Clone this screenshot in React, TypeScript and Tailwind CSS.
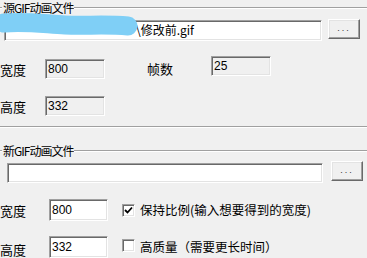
const cjk = "font-['Noto_Sans_CJK_SC','Noto_Sans',sans-serif]";

const Etched = ({ className = "" }: { className?: string }) => (
    <div className={`h-[2px] border-t border-t-[#a0a0a0] border-b border-b-white ${className}`} />
);

const GroupTitle = ({ text }: { text: string }) => (
    <div className="flex items-center h-[15px]">
        <Etched className="w-[2px]" />
        <span className={`px-[1px] text-[12px] leading-none tracking-[-1px] text-black ${cjk}`}>{text}</span>
        <Etched className="flex-1" />
    </div>
);

const sunken =
    "border border-t-[#a0a0a0] border-l-[#a0a0a0] border-r-white border-b-white shadow-[inset_1px_1px_0_#696969,inset_-1px_-1px_0_#e3e3e3]";

const Field = ({
    value,
    readOnly,
    className = "",
}: {
    value: string;
    readOnly?: boolean;
    className?: string;
}) => (
    <div
        className={`flex items-center pl-[2px] pb-[1px] text-[12px] text-black font-['Liberation_Sans',sans-serif] ${sunken} ${
            readOnly ? "bg-[#f0f0f0]" : "bg-white"
        } ${className}`}
    >
        {value}
    </div>
);

const BrowseButton = ({ className = "" }: { className?: string }) => (
    <div
        className={`flex items-end justify-center pb-[5px] w-[32px] h-[20px] bg-[#f0f0f0] border border-t-white border-l-white border-r-[#696969] border-b-[#696969] shadow-[inset_-1px_-1px_0_#a0a0a0,inset_1px_1px_0_#e3e3e3] ${className}`}
    >
        <span className="text-[9px] leading-none tracking-[2px] text-[#333] font-['Liberation_Sans',sans-serif]">...</span>
    </div>
);

const Label = ({ text, className = "" }: { text: string; className?: string }) => (
    <span className={`leading-none text-black ${cjk} ${className}`}>{text}</span>
);

const Check = ({ checked }: { checked?: boolean }) => (
    <div className={`w-[13px] h-[13px] bg-white flex items-center justify-center ${sunken}`}>
        {checked && (
            <svg width="9" height="9" viewBox="0 0 9 9">
                <path d="M1 4 L3.5 6.5 L8 1.5" fill="none" stroke="#000" strokeWidth="1.8" />
            </svg>
        )}
    </div>
);

export default function App() {
    return (
        <div className="relative w-[367px] h-[258px] overflow-hidden bg-[#f0f0f0]">
            {/* source group */}
            <GroupTitle text="源GIF动画文件" />
            <div className="flex items-start mt-[5px] pl-[4px]">
                <div className={`flex items-center w-[318px] h-[21px] bg-white pb-[1px] text-[12px] text-black ${sunken} ${cjk}`}>
                    <span className="w-[131px] shrink-0" />
                    <span>\修改前.gif</span>
                </div>
                <BrowseButton className="ml-[6px] -mt-[1px]" />
            </div>
            <div className="flex items-center mt-[18px]">
                <Label text="宽度" className="text-[13px] w-[45px]" />
                <Field value="800" readOnly className="w-[60px] h-[20px]" />
                <Label text="帧数" className="text-[13px] ml-[42px] w-[64px] -mt-[1px]" />
                <Field value="25" readOnly className="w-[60px] h-[20px] -mt-[6px]" />
            </div>
            <div className="flex items-center mt-[17px]">
                <Label text="高度" className="text-[13px] w-[45px]" />
                <Field value="332" readOnly className="w-[60px] h-[20px]" />
            </div>
            <Etched className="mt-[10px]" />

            {/* target group */}
            <div className="mt-[15px]">
                <GroupTitle text="新GIF动画文件" />
            </div>
            <div className="flex items-start mt-[5px] pl-[7px]">
                <div className={`w-[316px] h-[20px] bg-white ${sunken}`} />
                <BrowseButton className="ml-[8px] -mt-[2px]" />
            </div>
            <div className="flex items-center mt-[16px]">
                <Label text="宽度" className="text-[13px] w-[49px]" />
                <Field value="800" className="w-[59px] h-[22px]" />
                <div className="ml-[14px]">
                    <Check checked />
                </div>
                <Label text="保持比例(输入想要得到的宽度)" className="text-[12.5px] ml-[5px]" />
            </div>
            <div className="flex items-start mt-[15px]">
                <Label text="高度" className="text-[13px] w-[49px] mt-[7px]" />
                <Field value="332" className="w-[59px] h-[22px]" />
                <div className="ml-[14px] mt-[3px]">
                    <Check />
                </div>
                <Label text="高质量（需要更长时间）" className="text-[12.5px] ml-[5px] mt-[5px]" />
            </div>

            {/* blurred-out path */}
            <svg className="absolute left-0 top-[12px]" width="145" height="30" viewBox="0 0 145 30">
                <path
                    d="M4 11 C 25 9, 45 12, 65 13 S 105 12, 128 14"
                    fill="none"
                    stroke="#7fcff6"
                    strokeWidth="19"
                    strokeLinecap="round"
                />
            </svg>
        </div>
    );
}
